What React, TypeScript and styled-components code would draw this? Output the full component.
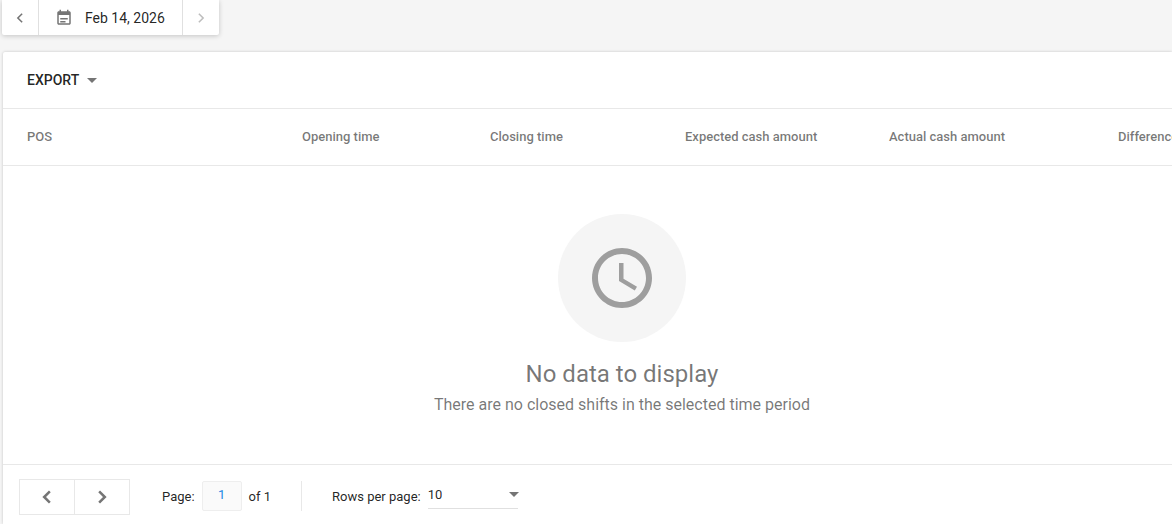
import { createGlobalStyle } from "styled-components"
import styled from "styled-components"

const GlobalStyle = createGlobalStyle`
  html, body {
    margin: 0;
    padding: 0;
    height: 524px;
    overflow: hidden;
    background-color: #f5f5f5;
    font-family: Roboto, "Liberation Sans", sans-serif;
  }
`
const Page = styled.div`
  width: 1172px;
  height: 524px;
  overflow: hidden;
  display: flex;
  flex-direction: column;
`
const DateBar = styled.div`
  display: flex;
  align-self: flex-start;
  height: 35px;
  margin-left: 2px;
  background-color: #fff;
  border-radius: 0 0 2px 2px;
  box-shadow: 0 1px 5px rgba(0, 0, 0, 0.2);
`
const DateArrow = styled.div<{ $muted?: boolean }>`
  width: 36px;
  display: flex;
  align-items: center;
  justify-content: center;
  color: ${(p) => (p.$muted ? "#bdbdbd" : "#757575")};
`
const DateLabel = styled.div`
  width: 145px;
  display: flex;
  align-items: center;
  gap: 12px;
  padding-left: 16px;
  box-sizing: border-box;
  border-left: 1px solid #e0e0e0;
  border-right: 1px solid #e0e0e0;
  font-size: 14px;
  color: rgba(0, 0, 0, 0.87);
`
const Card = styled.div`
  margin: 17px 0 0 3px;
  flex: 1;
  width: 1169px;
  background-color: #fff;
  border-radius: 2px 0 0 0;
  box-shadow: 0 0 3px rgba(0, 0, 0, 0.2);
  display: flex;
  flex-direction: column;
`
const Toolbar = styled.div`
  height: 56px;
  flex-shrink: 0;
  display: flex;
  align-items: center;
  padding-left: 24px;
  gap: 8px;
  border-bottom: 1px solid #e8e8e8;
`
const ExportLabel = styled.span`
  font-size: 14px;
  font-weight: 500;
  color: rgba(0, 0, 0, 0.87);
`
const Caret = styled.span`
  width: 0;
  height: 0;
  border-left: 5px solid transparent;
  border-right: 5px solid transparent;
  border-top: 5px solid #757575;
`
const SelectCaret = styled(Caret)`
  margin-right: -1px;
`
const TableHead = styled.div`
  height: 54px;
  flex-shrink: 0;
  display: grid;
  grid-template-columns: 275px 188px 195px 204px 229px 100px;
  align-items: center;
  padding: 0 0 2px 24px;
  border-bottom: 1px solid #e8e8e8;
  overflow: hidden;
`
const HeadCell = styled.div`
  font-size: 13px;
  font-weight: 500;
  color: rgba(0, 0, 0, 0.54);
  white-space: nowrap;
`
const Empty = styled.div`
  flex: 1;
  display: flex;
  flex-direction: column;
  align-items: center;
  padding-top: 48px;
  padding-left: 69px;
  border-bottom: 1px solid #e8e8e8;
`
const EmptyCircle = styled.div`
  width: 128px;
  height: 128px;
  border-radius: 50%;
  background-color: #f5f5f5;
  display: flex;
  align-items: center;
  justify-content: center;
  margin-bottom: 16px;
`
const EmptyTitle = styled.div`
  font-size: 24px;
  line-height: 32px;
  color: rgba(0, 0, 0, 0.54);
`
const EmptyText = styled.div`
  font-size: 16px;
  line-height: 24px;
  margin-top: 3px;
  color: rgba(0, 0, 0, 0.54);
`
const Footer = styled.div`
  height: 59px;
  box-sizing: border-box;
  flex-shrink: 0;
  display: flex;
  align-items: center;
  padding: 4px 0 0 16px;
  font-size: 13px;
  color: rgba(0, 0, 0, 0.87);
`
const PagerButtons = styled.div`
  display: flex;
  width: 111px;
  height: 36px;
  box-sizing: border-box;
  border: 1px solid #e8e8e8;
  margin-right: 32px;
`
const PagerButton = styled.div`
  flex: 1;
  display: flex;
  align-items: center;
  justify-content: center;
  color: #757575;
  & + & {
    border-left: 1px solid #e8e8e8;
  }
`
const PageInput = styled.div`
  width: 40px;
  height: 30px;
  margin: -2px 7px 0;
  box-sizing: border-box;
  display: flex;
  align-items: center;
  justify-content: center;
  background-color: #fafafa;
  border: 1px solid #eeeeee;
  border-radius: 2px;
  color: #1e88e5;
  font-size: 13px;
  padding-bottom: 3px;
`
const FooterDivider = styled.div`
  width: 1px;
  height: 30px;
  background-color: #e8e8e8;
  margin: -2px 30px 0;
`
const RowsSelect = styled.div`
  width: 90px;
  height: 26px;
  margin: -2px 0 0 7px;
  box-sizing: border-box;
  display: flex;
  align-items: center;
  justify-content: space-between;
  border-bottom: 1px solid #e0e0e0;
  padding-bottom: 2px;
`

const columns = ["POS", "Opening time", "Closing time", "Expected cash amount", "Actual cash amount", "Difference"]

const Chevron = ({ dir, size = 16, width = 2.2 }: { dir: "left" | "right"; size?: number; width?: number }) => (
  <svg width={size} height={size} viewBox="0 0 14 14" fill="none" stroke="currentColor" strokeWidth={width}>
    <path d={dir === "left" ? "M9.5 2 4.5 7 9.5 12" : "M4.5 2 9.5 7 4.5 12"} />
  </svg>
)

const App = () => {
  return (
    <Page>
      <GlobalStyle />
      <DateBar>
        <DateArrow>
          <Chevron dir="left" size={12} width={1.8} />
        </DateArrow>
        <DateLabel>
          <svg width="18" height="18" viewBox="0 0 24 24" fill="#757575">
            <path d="M17 12H7v2h10v-2zm2-9h-1V1h-2v2H8V1H6v2H5c-1.1 0-2 .9-2 2v14c0 1.1.9 2 2 2h14c1.1 0 2-.9 2-2V5c0-1.1-.9-2-2-2zm0 16H5V8h14v11zm-5-3H7v2h7v-2z" />
          </svg>
          Feb 14, 2026
        </DateLabel>
        <DateArrow $muted>
          <Chevron dir="right" size={12} width={1.8} />
        </DateArrow>
      </DateBar>
      <Card>
        <Toolbar>
          <ExportLabel>EXPORT</ExportLabel>
          <Caret />
        </Toolbar>
        <TableHead>
          {columns.map((c) => (
            <HeadCell key={c}>{c}</HeadCell>
          ))}
        </TableHead>
        <Empty>
          <EmptyCircle>
            <svg width="72" height="72" viewBox="0 0 24 24" fill="#9e9e9e">
              <path d="M11.99 2C6.47 2 2 6.48 2 12s4.47 10 9.99 10C17.52 22 22 17.52 22 12S17.52 2 11.99 2zM12 20c-4.42 0-8-3.58-8-8s3.58-8 8-8 8 3.58 8 8-3.58 8-8 8z" />
              <path d="M12.5 7H11v6l5.25 3.15.75-1.23-4.5-2.67z" />
            </svg>
          </EmptyCircle>
          <EmptyTitle>No data to display</EmptyTitle>
          <EmptyText>There are no closed shifts in the selected time period</EmptyText>
        </Empty>
        <Footer>
          <PagerButtons>
            <PagerButton>
              <Chevron dir="left" />
            </PagerButton>
            <PagerButton>
              <Chevron dir="right" />
            </PagerButton>
          </PagerButtons>
          Page:
          <PageInput>1</PageInput>
          of 1
          <FooterDivider />
          Rows per page:
          <RowsSelect>
            10
            <SelectCaret />
          </RowsSelect>
        </Footer>
      </Card>
    </Page>
  )
}

export default App
